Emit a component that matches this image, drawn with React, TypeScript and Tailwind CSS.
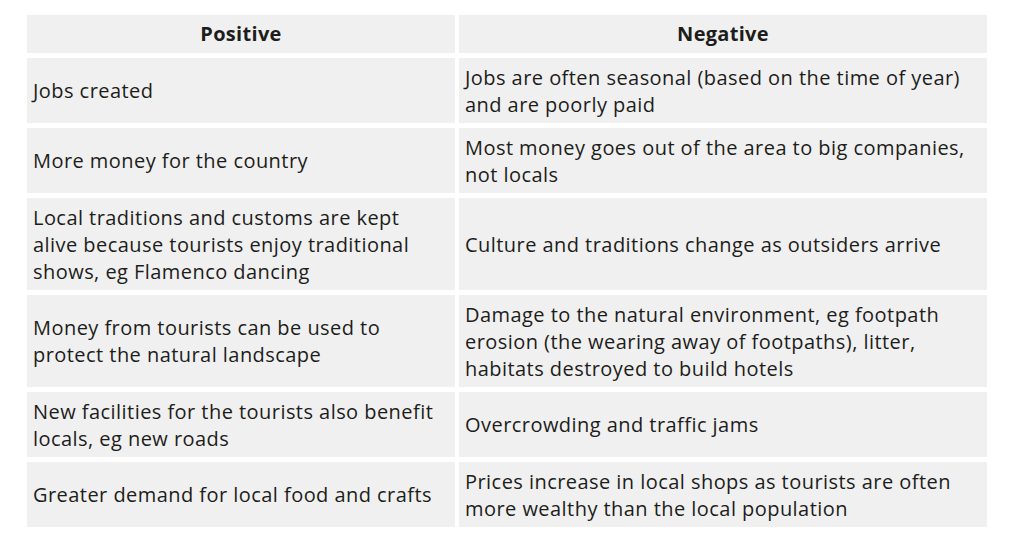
const rows: [string[], string[]][] = [
  [['Jobs created'], ['Jobs are often seasonal (based on the time of year)', 'and are poorly paid']],
  [['More money for the country'], ['Most money goes out of the area to big companies,', 'not locals']],
  [
    ['Local traditions and customs are kept', 'alive because tourists enjoy traditional', 'shows, eg Flamenco dancing'],
    ['Culture and traditions change as outsiders arrive'],
  ],
  [
    ['Money from tourists can be used to', 'protect the natural landscape'],
    [
      'Damage to the natural environment, eg footpath',
      'erosion (the wearing away of footpaths), litter,',
      'habitats destroyed to build hotels',
    ],
  ],
  [['New facilities for the tourists also benefit', 'locals, eg new roads'], ['Overcrowding and traffic jams']],
  [
    ['Greater demand for local food and crafts'],
    ['Prices increase in local shops as tourists are often', 'more wealthy than the local population'],
  ],
];

function Cell({ lines }: { lines: string[] }) {
  return (
    <div className="flex flex-col justify-center bg-[#f0f0f0] px-[6px] py-[5.5px] text-[20px] leading-[27px] tracking-[0.45px] whitespace-nowrap">
      {lines.map((l) => (
        <span key={l}>{l}</span>
      ))}
    </div>
  );
}

export default function App() {
  return (
    <div className="min-h-[546px] bg-white pt-[15px] pl-[27px] font-['Open_Sans',sans-serif] text-[#1d1d1b]">
      <div className="grid w-[960px] grid-cols-[428px_528px] gap-x-[4px] gap-y-[5px]">
        <div className="flex h-[38px] items-center justify-center bg-[#f0f0f0] text-[20px] font-bold tracking-[0.3px]">
          Positive
        </div>
        <div className="flex h-[38px] items-center justify-center bg-[#f0f0f0] text-[20px] font-bold tracking-[0.3px]">
          Negative
        </div>
        {rows.map(([pos, neg], i) => (
          <div key={i} className="contents">
            <Cell lines={pos} />
            <Cell lines={neg} />
          </div>
        ))}
      </div>
    </div>
  );
}
